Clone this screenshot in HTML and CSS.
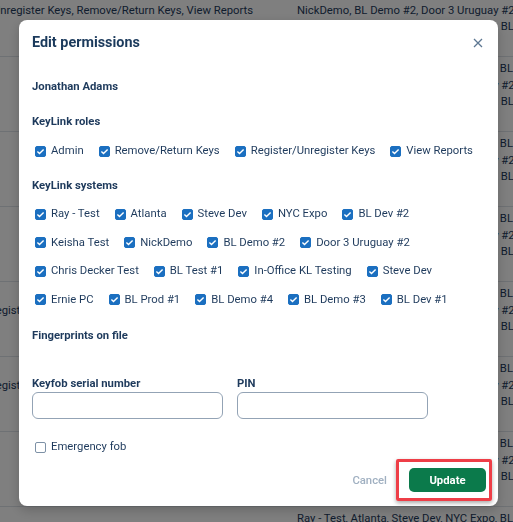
FILE: index.html
```html
<!DOCTYPE html>
<html lang="en">
<head>
  <meta charset="UTF-8">
  <meta name="viewport" content="width=device-width, initial-scale=1.0">
  <title>Users - Edit permissions</title>
  <link rel="stylesheet" href="styles.css">
</head>
<body>

  <!-- user table behind the dialog -->
  <div class="user-table">
    <div class="user-row">
      <div class="cell-roles">
        <span>Unregister Keys, Remove/Return Keys, View Reports</span>
        <span>Admin</span>
      </div>
      <div class="cell-systems">
        <span>Ray - Test, Atlanta, Steve Dev, NYC Expo, BL Dev #2, Keisha Test,</span>
        <span>NickDemo, BL Demo #2, Door 3 Uruguay #2, Chris Decker Test, BL Test #1,</span>
        <span>In-Office KL Testing, Steve Dev, Ernie PC, BL Prod #1, BL Demo #4,</span>
        <span>BL Demo #3, BL Dev #1</span>
      </div>
    </div>
    <div class="user-row">
      <div class="cell-roles"><span>Admin</span></div>
      <div class="cell-systems">
        <span>Ray - Test, Atlanta, Steve Dev, NYC Expo, BL Dev #2, Keisha Test,</span>
        <span>NickDemo, BL Demo #2, Door 3 Uruguay #2, Chris Decker Test, BL Test #1,</span>
        <span>In-Office KL Testing, Steve Dev, Ernie PC, BL Prod #1, BL Demo #4,</span>
        <span>BL Demo #3, BL Dev #1</span>
      </div>
    </div>
    <div class="user-row">
      <div class="cell-roles"><span>Admin</span></div>
      <div class="cell-systems">
        <span>Ray - Test, Atlanta, Steve Dev, NYC Expo, BL Dev #2, Keisha Test,</span>
        <span>NickDemo, BL Demo #2, Door 3 Uruguay #2, Chris Decker Test, BL Test #1,</span>
        <span>In-Office KL Testing, Steve Dev, Ernie PC, BL Prod #1, BL Demo #4,</span>
        <span>BL Demo #3, BL Dev #1</span>
      </div>
    </div>
    <div class="user-row">
      <div class="cell-roles"><span>View Reports</span></div>
      <div class="cell-systems">
        <span>Ray - Test, Atlanta, Steve Dev, NYC Expo, BL Dev #2, Keisha Test,</span>
        <span>NickDemo, BL Demo #2, Door 3 Uruguay #2, Chris Decker Test, BL Test #1,</span>
        <span>In-Office KL Testing, Steve Dev, Ernie PC, BL Prod #1, BL Demo #4,</span>
        <span>BL Demo #3, BL Dev #1</span>
      </div>
    </div>
    <div class="user-row">
      <div class="cell-roles">
        <span>Admin, Register/Unregister Keys, Remove/Return Keys, View Reports</span>
        <span>Admin</span>
      </div>
      <div class="cell-systems">
        <span>Ray - Test, Atlanta, Steve Dev, NYC Expo, BL Dev #2, Keisha Test,</span>
        <span>NickDemo, BL Demo #2, Door 3 Uruguay #2, Chris Decker Test, BL Test #1,</span>
        <span>In-Office KL Testing, Steve Dev, Ernie PC, BL Prod #1, BL Demo #4,</span>
        <span>BL Demo #3, BL Dev #1</span>
      </div>
    </div>
    <div class="user-row">
      <div class="cell-roles">
        <span>Admin, Register/Unregister Keys, Remove/Return Keys, View Reports</span>
        <span>Admin</span>
      </div>
      <div class="cell-systems">
        <span>Ray - Test, Atlanta, Steve Dev, NYC Expo, BL Dev #2, Keisha Test,</span>
        <span>NickDemo, BL Demo #2, Door 3 Uruguay #2, Chris Decker Test, BL Test #1,</span>
        <span>In-Office KL Testing, Steve Dev, Ernie PC, BL Prod #1, BL Demo #4,</span>
        <span>BL Demo #3, BL Dev #1</span>
      </div>
    </div>
    <div class="user-row">
      <div class="cell-roles"><span>Admin</span></div>
      <div class="cell-systems">
        <span>Ray - Test, Atlanta, Steve Dev, NYC Expo, BL Dev #2, Keisha Test,</span>
        <span>NickDemo, BL Demo #2, Door 3 Uruguay #2, Chris Decker Test, BL Test #1,</span>
        <span>In-Office KL Testing, Steve Dev, Ernie PC, BL Prod #1, BL Demo #4,</span>
        <span>BL Demo #3, BL Dev #1</span>
      </div>
    </div>
    <div class="user-row">
      <div class="cell-roles"><span>Admin</span></div>
      <div class="cell-systems">
        <span>Ray - Test, Atlanta, Steve Dev, NYC Expo, BL Dev #2, Keisha Test,</span>
        <span>NickDemo, BL Demo #2, Door 3 Uruguay #2, Chris Decker Test, BL Test #1,</span>
        <span>In-Office KL Testing, Steve Dev, Ernie PC, BL Prod #1, BL Demo #4,</span>
        <span>BL Demo #3, BL Dev #1</span>
      </div>
    </div>
  </div>

  <div class="backdrop">
    <div class="modal">
      <div class="modal-header">
        <h2>Edit permissions</h2>
        <button class="close-btn" aria-label="Close">
          <svg width="10" height="10" viewBox="0 0 10 10"><path d="M1 1L9 9M9 1L1 9" stroke="#5d7792" stroke-width="1.3" fill="none"/></svg>
        </button>
      </div>

      <div class="user-name">Jonathan Adams</div>

      <div class="section-title">KeyLink roles</div>
      <div class="check-list roles">
        <label class="check"><span class="box on"></span>Admin</label>
        <label class="check"><span class="box on"></span>Remove/Return Keys</label>
        <label class="check"><span class="box on"></span>Register/Unregister Keys</label>
        <label class="check"><span class="box on"></span>View Reports</label>
      </div>

      <div class="section-title">KeyLink systems</div>
      <div class="check-list systems">
        <label class="check"><span class="box on"></span>Ray - Test</label>
        <label class="check"><span class="box on"></span>Atlanta</label>
        <label class="check"><span class="box on"></span>Steve Dev</label>
        <label class="check"><span class="box on"></span>NYC Expo</label>
        <label class="check"><span class="box on"></span>BL Dev #2</label>
        <label class="check"><span class="box on"></span>Keisha Test</label>
        <label class="check"><span class="box on"></span>NickDemo</label>
        <label class="check"><span class="box on"></span>BL Demo #2</label>
        <label class="check"><span class="box on"></span>Door 3 Uruguay #2</label>
        <label class="check"><span class="box on"></span>Chris Decker Test</label>
        <label class="check"><span class="box on"></span>BL Test #1</label>
        <label class="check"><span class="box on"></span>In-Office KL Testing</label>
        <label class="check"><span class="box on"></span>Steve Dev</label>
        <label class="check"><span class="box on"></span>Ernie PC</label>
        <label class="check"><span class="box on"></span>BL Prod #1</label>
        <label class="check"><span class="box on"></span>BL Demo #4</label>
        <label class="check"><span class="box on"></span>BL Demo #3</label>
        <label class="check"><span class="box on"></span>BL Dev #1</label>
      </div>

      <div class="section-title fingerprints">Fingerprints on file</div>

      <div class="fields">
        <label class="field">
          <span>Keyfob serial number</span>
          <input type="text">
        </label>
        <label class="field">
          <span>PIN</span>
          <input type="text">
        </label>
      </div>

      <div class="check-list emergency">
        <label class="check"><span class="box"></span>Emergency fob</label>
      </div>

      <div class="modal-footer">
        <button class="cancel-btn">Cancel</button>
        <button class="update-btn">Update<span class="highlight"></span></button>
      </div>
    </div>
  </div>

</body>
</html>
```

FILE: styles.css
```css
body {
  margin: 0;
  font-family: Roboto, "Liberation Sans", Arial, sans-serif;
  font-size: 11.3px;
  color: #1e3a5c;
  background-color: #fff;
  overflow: hidden;
  height: 522px;
}

/* background table */
.user-table {
  margin-top: -18px;
  margin-left: -40px;
}
.user-row {
  display: flex;
  height: 74px;
  border-bottom: 1px solid #dde2e8;
}
.cell-roles {
  width: 326px;
  display: flex;
  flex-direction: column;
  justify-content: center;
  align-items: center;
  white-space: nowrap;
  line-height: 16.5px;
  flex-shrink: 0;
}
.cell-systems {
  padding-left: 11px;
  display: flex;
  flex-direction: column;
  justify-content: center;
  white-space: nowrap;
  line-height: 16.5px;
}

/* dialog */
.backdrop {
  position: fixed;
  top: 0;
  left: 0;
  right: 0;
  bottom: 0;
  background-color: rgba(0, 0, 0, 0.5);
}
.modal {
  margin: 20px 0 0 19px;
  width: 479px;
  box-sizing: border-box;
  background: #fff;
  border-radius: 8px;
  padding: 13px 13px 14px;
  box-shadow: 0 4px 12px rgba(0, 0, 0, 0.2);
}
.modal-header {
  display: flex;
  justify-content: space-between;
  align-items: center;
  height: 20px;
}
.modal-header h2 {
  margin: 0;
  font-size: 14.4px;
  line-height: 20px;
  font-weight: 700;
  color: #1b3a5c;
}
.close-btn {
  width: 14px;
  height: 14px;
  padding: 0;
  border: none;
  background: none;
  display: flex;
  align-items: center;
  justify-content: center;
  cursor: pointer;
}
.user-name {
  margin-top: 26px;
  line-height: 16px;
  font-weight: 700;
}
.section-title {
  margin-top: 19px;
  line-height: 16px;
  font-weight: 700;
}
.section-title.fingerprints {
  margin-top: 20.5px;
}

.check-list {
  display: flex;
  flex-wrap: wrap;
  column-gap: 12px;
  row-gap: 12.5px;
  margin-top: 13px;
}
.check-list.systems {
  margin-top: 12px;
}
.check-list.emergency {
  margin-top: 20px;
}
.check {
  display: inline-flex;
  align-items: center;
  gap: 5px;
  margin-left: 3px;
  line-height: 16px;
  white-space: nowrap;
}
.box {
  width: 11px;
  height: 11px;
  box-sizing: border-box;
  border: 1px solid #7d91a6;
  border-radius: 2px;
  background: #fff;
}
.box.on {
  border-color: #1b6fc0;
  background: #1b6fc0 url("data:image/svg+xml,%3Csvg xmlns='http://www.w3.org/2000/svg' viewBox='0 0 11 11'%3E%3Cpath d='M2.4 5.6L4.5 7.6L8.6 3.4' stroke='white' stroke-width='1.4' fill='none'/%3E%3C/svg%3E") center / 11px 11px no-repeat;
}

.fields {
  display: flex;
  gap: 14px;
  margin-top: 32px;
}
.field {
  display: flex;
  flex-direction: column;
  width: 191px;
}
.field span {
  line-height: 16px;
  font-weight: 700;
}
.field input {
  height: 27px;
  box-sizing: border-box;
  border: 1px solid #93a3b5;
  border-radius: 6px;
  font: inherit;
  padding: 0 8px;
}

.modal-footer {
  display: flex;
  justify-content: flex-end;
  align-items: center;
  gap: 22px;
  margin-top: 13px;
}
.cancel-btn {
  border: none;
  background: none;
  padding: 0;
  font: inherit;
  font-weight: 500;
  color: #a0b0c1;
  cursor: pointer;
}
.update-btn {
  position: relative;
  width: 77px;
  height: 24px;
  margin-right: -1px;
  border: none;
  border-radius: 5px;
  background-color: #0b7a4b;
  color: #fff;
  font: inherit;
  font-weight: 700;
  cursor: pointer;
}
.highlight {
  position: absolute;
  top: -9px;
  bottom: -9px;
  left: -13px;
  right: -6px;
  border: 3px solid #ee3e47;
  border-radius: 2px;
  box-shadow: 0 2px 4px rgba(0, 0, 0, 0.35);
}
```
